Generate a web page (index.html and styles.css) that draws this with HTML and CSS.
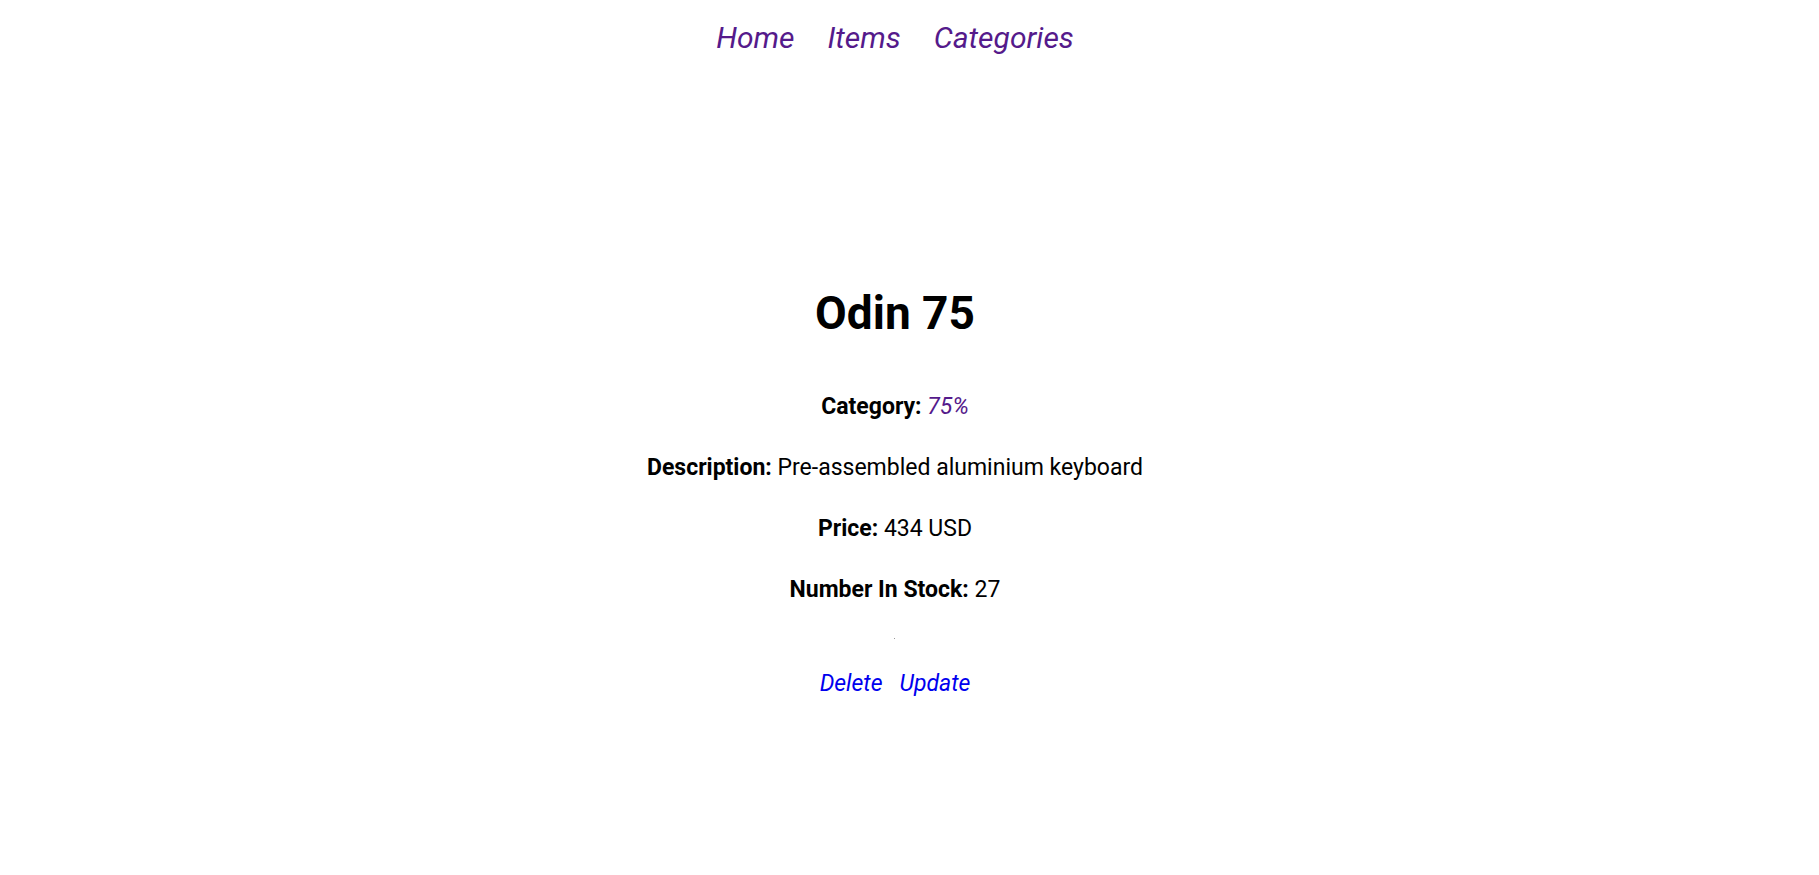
FILE: index.html
```html
<!DOCTYPE html>
<html lang="en">
<head>
<meta charset="utf-8">
<title>Odin 75</title>
<link rel="stylesheet" href="styles.css">
</head>
<body>
<div class="page">
  <nav class="nav">
    <a class="nav-link" href="#">Home</a>
    <a class="nav-link" href="#">Items</a>
    <a class="nav-link" href="#">Categories</a>
  </nav>
  <main class="item">
    <h1 class="title">Odin 75</h1>
    <div class="details">
      <p class="row"><strong>Category:</strong> <a class="cat-link" href="#">75%</a></p>
      <p class="row"><strong>Description:</strong> Pre-assembled aluminium keyboard</p>
      <p class="row"><strong>Price:</strong> 434 USD</p>
      <p class="row"><strong>Number In Stock:</strong> 27</p>
    </div>
    <span class="pic"></span>
    <div class="actions">
      <a class="action" href="#">Delete</a>
      <a class="action" href="#">Update</a>
    </div>
  </main>
</div>
</body>
</html>
```

FILE: styles.css
```css
html, body {
  margin: 0;
  padding: 0;
  background: #fff;
}
body {
  font-family: Roboto, "Noto Sans CJK KR", sans-serif;
  color: #000;
}
.page {
  width: 1790px;
  display: flex;
  flex-direction: column;
  align-items: center;
}
.nav {
  display: flex;
  gap: 33px;
  padding-top: 20px;
  line-height: 36px;
  font-size: 30px;
}
.nav-link {
  color: #551a8b;
  font-style: italic;
  text-decoration: none;
}
.item {
  display: flex;
  flex-direction: column;
  align-items: center;
  margin-top: 232px;
}
.title {
  margin: 0;
  font-size: 46px;
  line-height: 50px;
  font-weight: 700;
}
.details {
  margin-top: 54px;
  display: flex;
  flex-direction: column;
  align-items: center;
  gap: 31px;
  font-size: 23px;
  line-height: 30px;
}
.row {
  margin: 0;
}
.row strong {
  font-weight: 700;
}
.cat-link {
  color: #551a8b;
  font-style: italic;
  text-decoration: none;
}
.pic {
  display: block;
  width: 1px;
  height: 1px;
  background: #999;
  margin-top: 33px;
}
.actions {
  margin-top: 30px;
  display: flex;
  gap: 17px;
  font-size: 23px;
  line-height: 30px;
}
.action {
  color: #0000ee;
  font-style: italic;
  text-decoration: none;
}
```
